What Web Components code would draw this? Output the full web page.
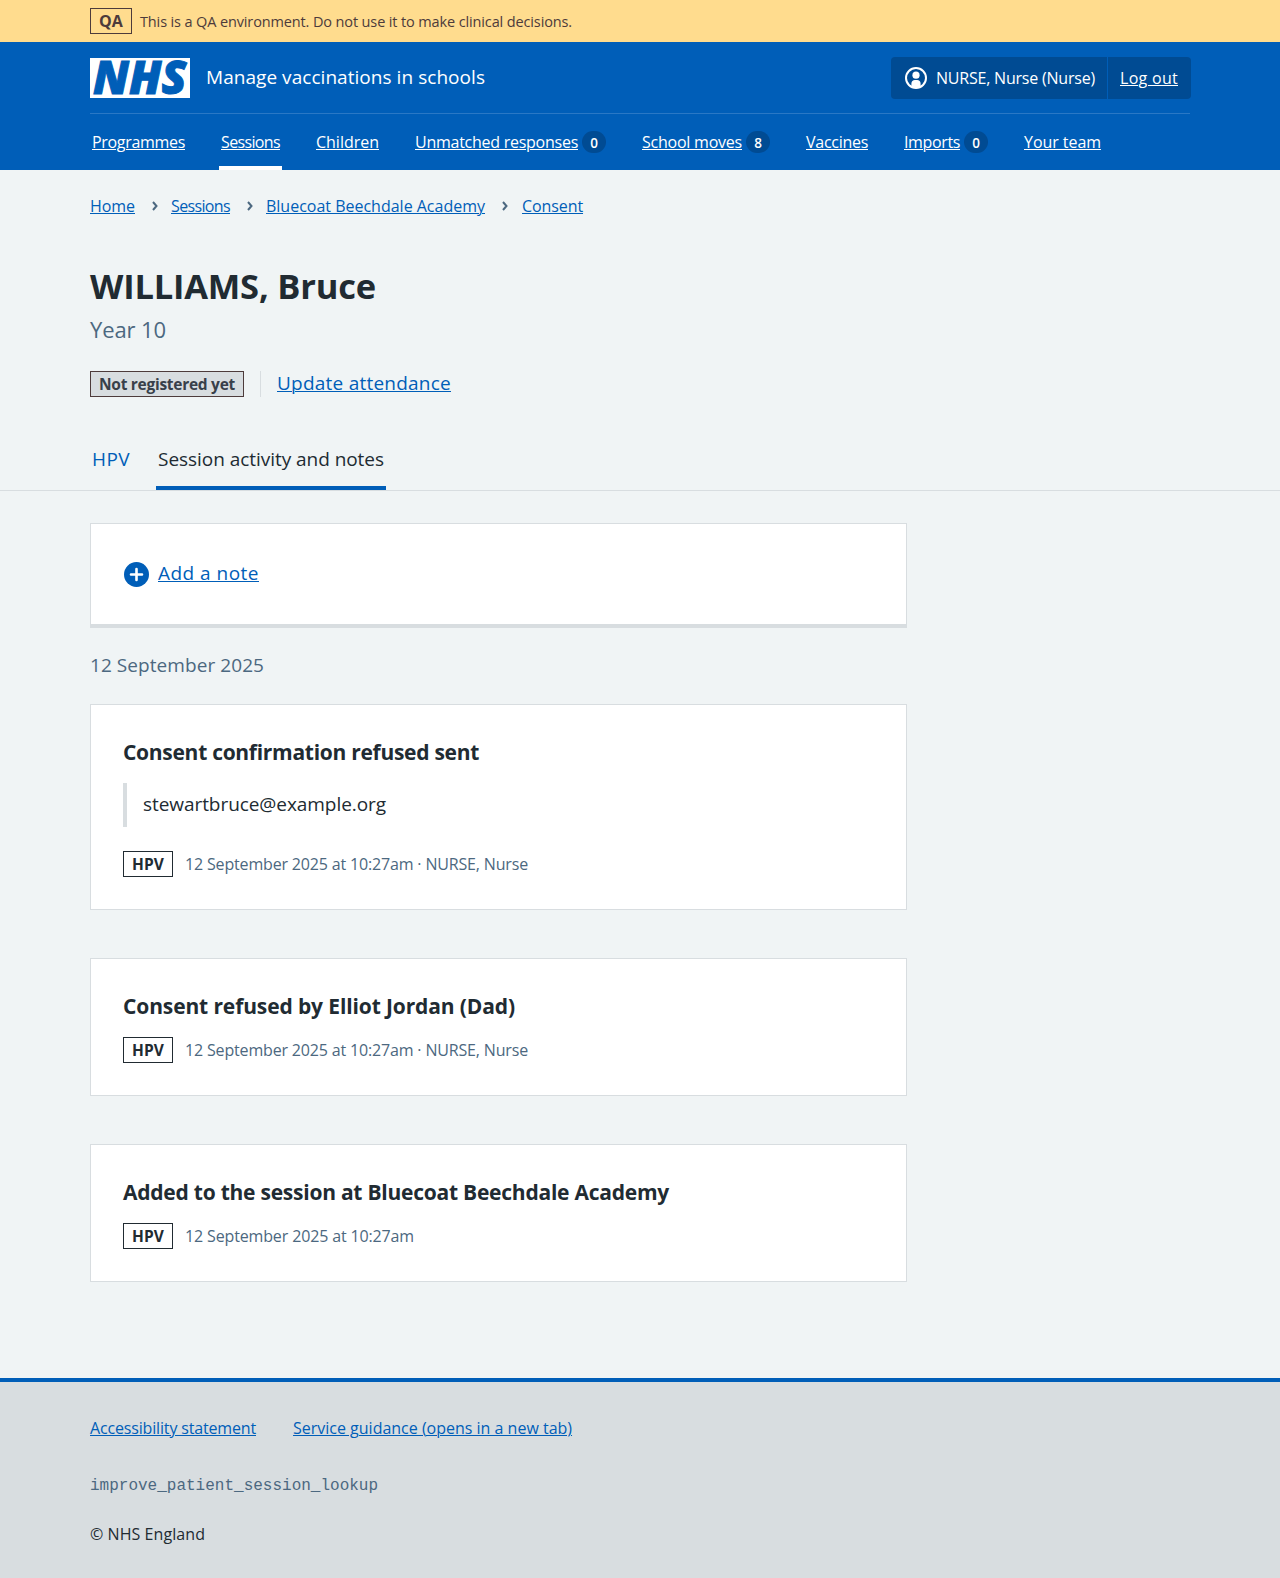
<!DOCTYPE html>
<html lang="en">
<head>
<meta charset="utf-8">
<title>WILLIAMS, Bruce – Manage vaccinations in schools</title>
<style>
html{background:#d8dde0}
body{margin:0;background:#f0f4f5;color:#212b32;font:400 16px/24px "Open Sans","Noto Sans",sans-serif}
</style>
</head>
<body>
<patient-page></patient-page>
<script>
const make = (name, html, setup) => {
  const tpl = document.createElement('template');
  tpl.innerHTML = html;
  customElements.define(name, class extends HTMLElement {
    connectedCallback() {
      if (this.shadowRoot) return;
      this.attachShadow({ mode: 'open' }).append(tpl.content.cloneNode(true));
      if (setup) setup(this, this.shadowRoot);
    }
  });
};

make('patient-page', `
<style>
:host{display:flex;flex-direction:column;--secondary:#4c6880}
main{display:flex;flex-direction:column;align-items:flex-start;box-sizing:border-box;width:817px;margin:0 0 0 90px;padding-top:32px;height:887px}
.date{font-size:19px;line-height:28px;color:var(--secondary);margin:23px 0 25px;height:28px;display:flex}
event-card{align-self:stretch}
event-card + event-card{margin-top:48px}
</style>
<qa-banner></qa-banner>
<site-header></site-header>
<crumb-trail></crumb-trail>
<patient-summary></patient-summary>
<tab-bar></tab-bar>
<main>
  <add-note></add-note>
  <div class="date"><x-text w="174">12 September 2025</x-text></div>
  <event-card><x-text slot="title" w="356">Consent confirmation refused sent</x-text><x-text slot="quote" w="243">stewartbruce@example.org</x-text><x-text w="343">12 September 2025 at 10:27am · NURSE, Nurse</x-text></event-card>
  <event-card><x-text slot="title" w="392">Consent refused by Elliot Jordan (Dad)</x-text><x-text w="343">12 September 2025 at 10:27am · NURSE, Nurse</x-text></event-card>
  <event-card><x-text slot="title" w="546">Added to the session at Bluecoat Beechdale Academy</x-text><x-text w="229">12 September 2025 at 10:27am</x-text></event-card>
</main>
<site-footer></site-footer>
`);

make('qa-banner', `
<style>
:host{display:flex;align-items:center;gap:8px;box-sizing:border-box;height:42px;padding-left:90px;background:#ffdc8e;color:#4d3b3b;font-size:14.5px}
b{display:flex;justify-content:center;box-sizing:border-box;width:42px;height:26px;border:1px solid #4d3b3b;font-size:16px;font-weight:700;line-height:24px}
.msg{padding-top:2px}
</style>
<b><x-text w="24">QA</x-text></b><x-text class="msg" w="432">This is a QA environment. Do not use it to make clinical decisions.</x-text>
`);

make('nhs-logo', `
<style>:host{display:block;width:100px;height:40px}svg{display:block;overflow:visible}
text{font:italic 800 46px "Open Sans",sans-serif;fill:#005eb8;stroke:#005eb8;stroke-width:1}</style>
<svg width="100" height="40" viewBox="0 0 100 40"><path fill="#fff" d="M0 0h100v40H0z"/><text x="3" y="36.400" textLength="93.500" lengthAdjust="spacingAndGlyphs">NHS</text></svg>
`);

make('site-header', `
<style>
:host{display:block;height:128px;background:#005eb8;color:#fff}
.top{display:flex;align-items:center;margin:0 90px;height:71px;border-bottom:1px solid #2a78c5}
.name{font-size:19px;line-height:28px;margin-left:16px;padding-bottom:2px;display:flex}
.account{display:flex;margin:0 -1px 0 auto;height:42px;border-radius:4px;background:#004b93;align-items:stretch}
.user,.out{display:flex;align-items:center}
.user{width:217px;border-right:1px solid #005eb8;box-sizing:border-box;padding-left:14px;gap:9px}
.out{width:83px;padding-left:12px;box-sizing:border-box}
svg{display:block;flex:none}
nav{display:flex;margin-left:90px;height:56px}
</style>
<div class="top">
  <nhs-logo></nhs-logo>
  <span class="name"><x-text w="279">Manage vaccinations in schools</x-text></span>
  <div class="account">
    <div class="user"><svg width="22" height="22" viewBox="0 0 22 22"><circle cx="11" cy="11" r="10" fill="none" stroke="#fff" stroke-width="2"/><circle cx="11" cy="8.2" r="3.6" fill="#fff"/><path fill="#fff" d="M6.4 20v-3.6c0-2 1.5-3.5 3.5-3.5h2.2c2 0 3.5 1.5 3.5 3.5V20c-2.800 1.500-6.400 1.500-9.200 0z"/></svg><x-text w="159">NURSE, Nurse (Nurse)</x-text></div>
    <div class="out"><x-text link w="58">Log out</x-text></div>
  </div>
</div>
<nav>
  <nav-item style="width:129px"><x-text link w="93">Programmes</x-text></nav-item>
  <nav-item current style="width:95px"><x-text link w="59">Sessions</x-text></nav-item>
  <nav-item style="width:99px"><x-text link w="63">Children</x-text></nav-item>
  <nav-item count="0" style="width:227px"><x-text link w="163">Unmatched responses</x-text></nav-item>
  <nav-item count="8" style="width:164px"><x-text link w="100">School moves</x-text></nav-item>
  <nav-item style="width:98px"><x-text link w="62">Vaccines</x-text></nav-item>
  <nav-item count="0" style="width:120px"><x-text link w="56">Imports</x-text></nav-item>
  <nav-item><x-text link w="77">Your team</x-text></nav-item>
</nav>
`);

make('nav-item', `
<style>
:host{display:block;height:56px}
div{display:inline-flex;align-items:center;gap:4px;box-sizing:border-box;height:56px;padding:6px 2px 2px;vertical-align:top;border-bottom:4px solid transparent}
:host([current]) div{border-color:#fff}
i{display:none;align-items:center;justify-content:center;box-sizing:border-box;width:24px;height:22px;border-radius:12px;background:#004b93;font-style:normal;font-size:13.5px;font-weight:600;line-height:20px;padding-top:1px}
:host([count]) i{display:flex}
</style>
<div><slot></slot><i></i></div>
`, (el, root) => { root.querySelector('i').textContent = el.getAttribute('count') || ''; });

make('crumb-trail', `
<style>
:host{display:flex;align-items:center;height:24px;margin:24px 0 0 90px;color:#005eb8}
svg{display:block;flex:none}
path{fill:none;stroke:var(--secondary);stroke-width:2}
</style>
<x-text link w="45">Home</x-text><svg width="36" height="12" viewBox="0 0 36 12"><path d="M18 2l3.500 4-3.500 4"/></svg>
<x-text link w="59">Sessions</x-text><svg width="36" height="12" viewBox="0 0 36 12"><path d="M18 2l3.500 4-3.500 4"/></svg>
<x-text link w="219">Bluecoat Beechdale Academy</x-text><svg width="37" height="12" viewBox="0 0 37 12"><path d="M18 2l3.500 4-3.500 4"/></svg>
<x-text link w="61">Consent</x-text>
`);

make('patient-summary', `
<style>
:host{display:flex;flex-direction:column;align-items:flex-start;margin:46px 0 0 90px;height:175px}
h1{margin:0;font-size:34.5px;line-height:44px;font-weight:700;height:44px;display:flex}
p{margin:5px 0 0;font-size:22px;line-height:32px;height:32px;color:var(--secondary);display:flex}
.row{display:flex;align-items:center;margin-top:26px;height:26px}
.row span{border:solid #d8dde0;border-width:0 1px 0 0;height:26px;padding-right:16px;margin-right:16px}
.act{font-size:19px;line-height:24px;padding-bottom:2px;color:#005eb8;display:flex}
</style>
<h1><x-text w="286">WILLIAMS, Bruce</x-text></h1>
<p><x-text w="76">Year 10</x-text></p>
<div class="row"><span><status-tag muted><x-text w="136">Not registered yet</x-text></status-tag></span><div class="act"><x-text link w="174">Update attendance</x-text></div></div>
`);

make('status-tag', `
<style>
:host{display:inline-flex;box-sizing:border-box;height:26px;padding:0 8px;border:1px solid #212b32;font-size:15.5px;line-height:24px;font-weight:700;color:#212b32;vertical-align:top}
:host([muted]){background:#d8dde0;border-color:#4d3b3b;color:#38404a}
</style><slot></slot>
`);

make('tab-bar', `
<style>
:host{display:flex;gap:24px;box-sizing:border-box;height:52px;padding-left:90px;border-bottom:1px solid #d8dde0;font-size:19px;line-height:28px;color:#005eb8;margin-top:0}
div{box-sizing:border-box;height:51px;padding:6px 2px 0;border-bottom:4px solid transparent}
.on{color:#212b32;border-color:#005eb8}
</style>
<div><x-text w="38">HPV</x-text></div><div class="on"><x-text w="226">Session activity and notes</x-text></div>
`);

make('add-note', `
<style>
:host{display:flex;align-self:stretch;align-items:center;box-sizing:border-box;height:105px;flex:none;background:#fff;border:1px solid #d8dde0;border-bottom-width:4px;padding-left:33px;gap:9px;color:#005eb8;font-size:19px;line-height:28px}
svg{display:block}
x-text{padding-bottom:2px}
</style>
<svg width="25" height="25" viewBox="0 0 25 25"><circle cx="12.500" cy="12.500" r="12.500" fill="#005eb8"/><path d="M12.500 7v11M7 12.500h11" stroke="#fff" stroke-width="2.600" stroke-linecap="round"/></svg>
<x-text link w="101">Add a note</x-text>
`);

make('event-card', `
<style>
:host{display:flex;flex-direction:column;align-items:flex-start;box-sizing:border-box;flex:none;background:#fff;border:1px solid #d8dde0;padding:32px 32px}
h2{margin:0 0 15px;font-size:21px;line-height:31px;height:31px;font-weight:700;display:flex}
.quote{display:flex;box-sizing:border-box;height:44px;margin:0 0 24px;padding:7px 16px;border-left:4px solid #d8dde0;font-size:19px;line-height:28px}
.meta{display:flex;align-items:center;gap:12px;height:26px;color:var(--secondary)}
.quote[hidden]{display:none}
</style>
<h2><slot name="title"></slot></h2>
<div class="quote"><slot name="quote"></slot></div>
<div class="meta"><status-tag><x-text w="32">HPV</x-text></status-tag><slot></slot></div>
`, (el, root) => { root.querySelector('.quote').hidden = !el.querySelector('[slot=quote]'); });

make('site-footer', `
<style>
:host{display:block;box-sizing:border-box;height:200px;border-top:4px solid #005eb8;background:#d8dde0;padding:34px 0 0 90px}
.links{display:flex;gap:37px;color:#005eb8;height:24px}
code{display:block;margin-top:34px;font:16px/24px "Liberation Mono",monospace;color:var(--secondary)}
p{margin:24px 0 0;height:24px;display:flex}
</style>
<div class="links"><x-text link w="166">Accessibility statement</x-text><x-text link w="279">Service guidance (opens in a new tab)</x-text></div>
<code>improve_patient_session_lookup</code>
<p><x-text w="115">© NHS England</x-text></p>
`);

/* A line of text tracked so that it occupies the width given in its "w" attribute. */
make('x-text', `
<style>
:host{display:inline-block;white-space:nowrap}
:host([link]) span{text-decoration:underline;text-decoration-thickness:1px;text-underline-offset:1px}
</style><span><slot></slot></span>
`, el => {
  const natural = el.getBoundingClientRect().width;
  el.style.letterSpacing = (el.getAttribute('w') - natural) / el.textContent.length + 'px';
});
</script>
</body>
</html>
